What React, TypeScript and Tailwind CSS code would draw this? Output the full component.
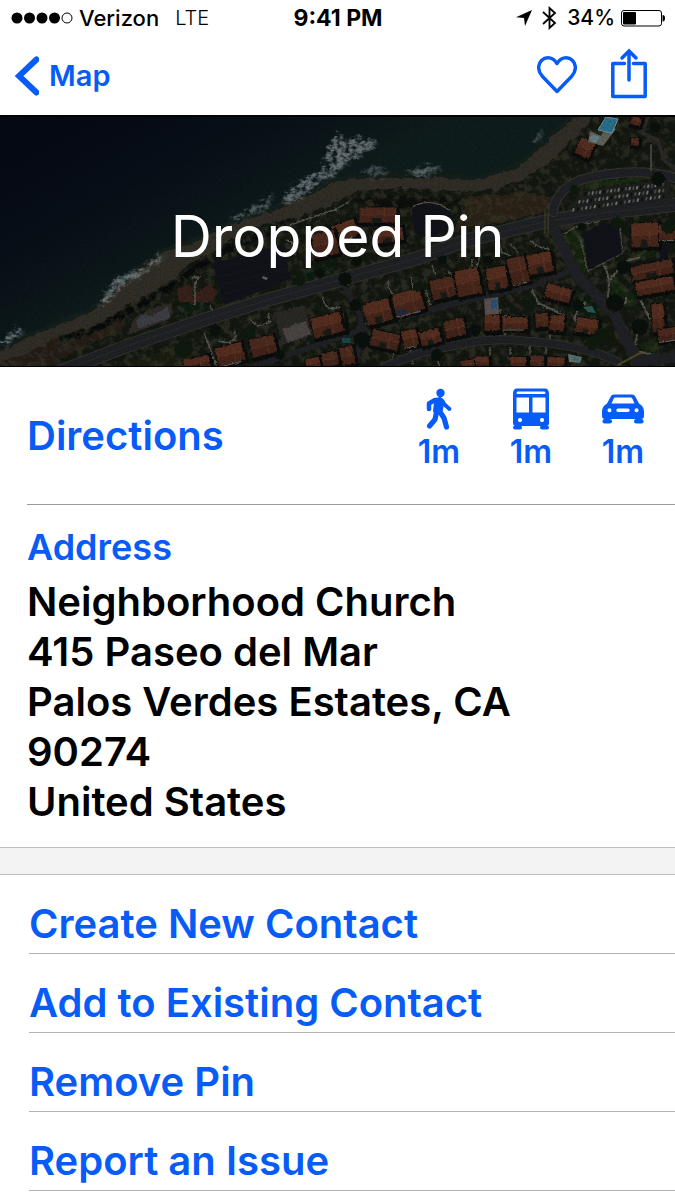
import React from "react";

type House = [x: number, y: number, w: number, h: number, angle: number];

const houses: House[] = [
  [378, 100, 37, 15, 0], [345, 115, 24, 16, -20], [388, 120, 30, 14, -8], [325, 129, 24, 24, -12],
  [378, 197, 26, 22, -15], [408, 187, 29, 22, -15], [443, 173, 24, 20, -12], [468, 167, 24, 26, -12],
  [497, 163, 20, 22, -10], [518, 155, 18, 26, -14], [540, 148, 24, 20, -10], [558, 178, 26, 14, 15],
  [385, 225, 28, 16, 12], [410, 223, 15, 16, -12], [430, 222, 20, 14, -15], [455, 213, 20, 17, -12],
  [492, 208, 15, 16, 0], [515, 208, 25, 12, 0], [542, 205, 13, 14, -5], [557, 208, 14, 16, 5],
  [587, 211, 22, 15, 10], [468, 249, 15, 8, -8], [482, 246, 14, 9, 0], [518, 247, 16, 10, 0],
  [537, 246, 14, 11, 0], [556, 247, 17, 10, 4], [338, 208, 14, 18, -8], [346, 241, 16, 18, -12],
  [645, 120, 27, 24, -2], [668, 117, 18, 15, 0], [652, 155, 42, 14, -12], [655, 171, 38, 14, -10],
  [658, 203, 12, 28, -3], [669, 219, 22, 12, -8], [585, 33, 15, 17, 25], [636, 6, 10, 8, 15],
  [635, 27, 8, 7, 0], [230, 239, 27, 18, -15], [197, 248, 26, 11, -12], [263, 231, 25, 18, -15],
  [327, 210, 30, 20, -15], [313, 248, 14, 10, -12], [330, 244, 16, 14, -12],
];

const trees = [
  [617, 108, 6], [624, 152, 7], [615, 188, 9], [602, 222, 9], [582, 112, 4], [658, 64, 7], [668, 112, 7],
  [345, 164, 7], [357, 146, 5], [300, 165, 6], [320, 158, 5], [442, 145, 5], [418, 172, 5], [362, 225, 8],
  [475, 215, 6], [530, 190, 6], [437, 240, 6], [215, 215, 6], [183, 235, 8], [280, 240, 5], [578, 190, 6],
  [250, 218, 6], [355, 190, 6], [488, 145, 5], [575, 75, 5], [640, 212, 8], [655, 12, 5], [592, 228, 7],
];

const parkedCars = Array.from({ length: 66 }, (_, i) => {
  const row = Math.floor(i / 22);
  const column = i % 22;
  return {
    x: 585 - row * 6 + column * (3.7 + row * 0.3),
    y: 77 + row * 8 - column * (0.45 + row * 0.1),
    bright: (i * 7) % 5,
  };
});

const coast =
  "M0 237L23 225L67 207L97 193L117 175L140 155L163 138L200 125L233 110L267 98L283 92L317 77L335 66L368 63L402 63L435 63L468 64L485 63L518 52L535 38L552 22L568 8L582 0";
const bluff =
  "M0 247L20 242L57 222L100 208L133 187L167 168L187 150L217 133L240 120L267 108L300 102L336 88L355 76L402 73L468 77L502 73L522 65L548 48L568 30L588 8L595 0";
const mainRoad = "M62 256L127 231L200 206L267 185L340 165L418 143L468 125L548 106L602 98L675 90";

function SatelliteMap() {
  return (
    <svg
      aria-hidden="true"
      className="absolute inset-0 h-full w-full"
      viewBox="0 0 675 252"
      preserveAspectRatio="xMidYMid slice"
      colorInterpolationFilters="sRGB"
    >
      <defs>
        <linearGradient id="sea" gradientUnits="userSpaceOnUse" x1="80" y1="0" x2="190" y2="200">
          <stop offset="0" stopColor="#050a14" />
          <stop offset="0.4" stopColor="#081018" />
          <stop offset="0.85" stopColor="#101d1d" />
        </linearGradient>
        <filter id="rough" x="-5%" y="-5%" width="110%" height="110%">
          <feTurbulence type="fractalNoise" baseFrequency="0.12" numOctaves="3" seed="4" />
          <feDisplacementMap in="SourceGraphic" scale="7" xChannelSelector="R" yChannelSelector="G" />
        </filter>
        <filter id="crumble" x="-5%" y="-5%" width="110%" height="110%">
          <feTurbulence type="fractalNoise" baseFrequency="0.35" numOctaves="2" seed="9" />
          <feDisplacementMap in="SourceGraphic" scale="3.5" xChannelSelector="R" yChannelSelector="G" />
        </filter>
        <filter id="spray" x="-10%" y="-10%" width="120%" height="120%">
          <feGaussianBlur in="SourceGraphic" stdDeviation="1.8" result="soft" />
          <feTurbulence type="fractalNoise" baseFrequency="0.16 0.22" numOctaves="4" seed="2" result="noise" />
          <feDisplacementMap in="soft" in2="noise" scale="12" xChannelSelector="R" yChannelSelector="G" result="torn" />
          <feColorMatrix in="noise" values="0 0 0 0 1  0 0 0 0 1  0 0 0 0 1  3 0 0 0 -0.8" result="mask" />
          <feComposite in="torn" in2="mask" operator="in" />
        </filter>
        <filter id="mottle" x="0" y="0" width="100%" height="100%">
          <feTurbulence type="fractalNoise" baseFrequency="0.13" numOctaves="4" seed="7" result="noise" />
          <feColorMatrix in="noise" values="0 0 0 0 0.23  0 0 0 0 0.22  0 0 0 0 0.17  4 0 0 0 -1.8" />
          <feComposite in2="SourceGraphic" operator="in" />
        </filter>
        <filter id="grain" x="0" y="0" width="100%" height="100%">
          <feTurbulence type="fractalNoise" baseFrequency="0.5" numOctaves="2" seed="3" />
          <feColorMatrix values="0 0 0 0 0  0 0 0 0 0  0 0 0 0 0  3 0 0 0 -1.2" />
        </filter>
      </defs>

      <rect width="675" height="252" fill="url(#sea)" />

      <g filter="url(#rough)">
        <path d={coast} fill="none" stroke="#141f1b" strokeWidth="9" />
        <path d={`${coast}L690 -10V270H-10V237Z`} fill="#302e26" />
        <path d={`${bluff}L690 -10V270H-10V247Z`} fill="#121710" />
        <path d="M0 247L20 242L57 222L100 208L133 190L120 215L80 235L40 256H0Z" fill="#241d16" />
        <path d="M60 225L100 212L133 194L167 174L200 150L240 128L290 108" fill="none" stroke="#080b0b" strokeWidth="6" />
        <path d="M350 84L400 80L460 84L440 98L380 92Z" fill="#0d0f0b" />
        <path d="M468 82L525 76L548 82L560 74L545 97L500 108L455 114Z" fill="#2a2217" />
      </g>

      <g fill="#0d1b10" filter="url(#crumble)">
        <path d="M220 195L285 175L310 150L335 148L337 158L268 180L225 196Z" />
        <path d="M175 190L210 185L212 198L178 208Z" />
        <path d="M562 122L580 112L590 148L585 160L570 145Z" fill="#15240e" />
        <path d="M610 165L618 165L636 182L634 192L612 190Z" fill="#132410" />
        <path d="M585 68L650 61L650 64L585 75Z" fill="#1a2a12" />
        <path d="M632 134L655 130L655 142L628 145Z" fill="#15220f" />
        <path d="M125 248L175 232L200 238L180 256H120Z" fill="#1a1d11" />
        <path d="M580 175L602 192L595 215L570 195Z" />
        <path d="M638 230L656 222L660 238L648 242Z" fill="#162310" />
      </g>
      <path d={`${bluff}L675 0V252H0Z`} fill="#fff" opacity="0.6" filter="url(#mottle)" />

      <g fill="none" stroke="#56554c" strokeWidth="1.4" filter="url(#crumble)">
        <path d="M204 218L218 254M190 202L192 210M210 190L214 204M234 214Q240 232 218 226M250 203Q255 215 270 207L268 198" />
        <path d="M323 182Q324 198 340 192M388 166Q390 188 408 182Q416 176 411 162M448 155Q455 169 472 156V145M432 150L435 160" />
        <path d="M500 130Q498 138 510 140M510 129L518 137M530 126Q540 134 550 134M480 140L476 155M416 172L422 186M454 158L458 178" />
        <path d="M368 191L366 212M392 184L394 205M426 175L430 190M452 213L452 225M500 194V225M505 200V222M550 197V225" />
        <path d="M395 236L388 252M410 232L413 250M430 226L440 252M490 232V252M510 232V252M530 229V252M546 229V252" />
        <path d="M577 210Q570 200 586 187M532 175L538 188L568 202M604 150Q612 165 607 186M607 186Q628 195 626 182" strokeWidth="2" />
        <path d="M640 204L634 235L655 241M610 165L624 147L640 142M640 184L650 204" strokeWidth="2" />
        <path d="M561 122Q572 110 600 106M620 110L622 138L588 156L580 122" stroke="#4c4b44" />
        <path d="M290 110L336 94L350 86M286 125Q298 128 295 140M412 92Q432 82 450 96" />
      </g>

      <g fill="none" stroke="#202125" strokeLinecap="round">
        <path d="M557 125Q560 140 579 160L608 188L626 214L632 238" stroke="#57564c" strokeWidth="4" />
        <path d={mainRoad} strokeWidth="14" stroke="#33332e" />
        <path d={mainRoad} strokeWidth="12" />
        <path d={mainRoad} strokeWidth="1" stroke="#2b2b2c" />
        <path d="M253 252L300 236L333 225L368 213L418 198L468 185L535 170L568 157" strokeWidth="6" />
        <path d="M385 252Q420 236 452 231Q490 222 525 226Q585 230 618 247" strokeWidth="9" stroke="#30302d" />
        <path d="M385 252Q420 236 452 231Q490 222 525 226Q585 230 618 247" strokeWidth="7" />
        <path d="M550 107L561 128L578 162L614 198L637 246L680 242" strokeWidth="11" />
        <path d="M553 97Q555 76 580 65Q635 50 679 64" strokeWidth="10" stroke="#363632" />
        <path d="M553 97Q555 76 580 65Q635 50 679 64" strokeWidth="8" />
        <path d="M648 2L642 18L658 25L664 45L678 56" strokeWidth="4" stroke="#2a2926" />
        <path d="M651 30V55" strokeWidth="2" stroke="#45433b" />
        <path d="M345 172L360 200L362 214L356 252" strokeWidth="5" />
        <path d="M545 98V118M548 98V118" strokeWidth="1" stroke="#4b4622" />
        <path d="M618 250L640 238" strokeWidth="2" stroke="#4b4622" />
      </g>

      <g fill="#12131a">
        <path d="M213 149L250 138L284 130L290 164L224 190Z" />
        <path d="M583 118L605 108L618 110L622 138L588 155Z" />
        <path d="M412 93Q432 82 450 97L456 112L432 122L414 118Z" />
        <path d="M568 92L585 76L668 64L672 84L575 98Z" fill="#1e201e" />
        <path d="M624 149L660 143L660 130L668 128V146L626 152Z" />
      </g>
      <g stroke="#191a22" strokeWidth="0.7">
        <path d="M217 154L286 137M219 162L288 145M221 170L289 153M223 179L290 160" />
      </g>
      {parkedCars.map((car, i) => (
        <rect
          key={i}
          x={car.x}
          y={car.y}
          width="1.8"
          height="3.4"
          fill={car.bright > 2 ? "#737776" : car.bright > 0 ? "#484c4d" : "#0d0e10"}
          transform={`rotate(18 ${car.x} ${car.y})`}
        />
      ))}

      <g filter="url(#crumble)">
        {houses.map(([x, y, w, h, angle], i) => (
          <g key={i} transform={`translate(${x} ${y}) rotate(${angle})`}>
            <rect x={-w / 2 - 1} y={-h / 2 - 1} width={w + 4} height={h + 5} fill="#0a0d0c" />
            <rect x={-w / 2} y={-h / 2} width={w} height={h} fill={i % 3 ? "#552e20" : "#4c2a1e"} />
            <path d={`M${-w / 2} 0H${w / 2}V${h / 2}H${-w / 2}Z`} fill="#3e2118" opacity="0.6" />
            <path d={`M${-w / 2} 0H${w / 2}M${w / 6} ${-h / 2}V${h / 2}`} stroke="#623726" strokeWidth="0.7" />
            {i % 2 === 0 && w > 18 && <rect x={-w / 6} y={h / 5} width={w / 4} height={h / 3} fill="#171b15" />}
            {i % 4 === 1 && <path d={`M${-w / 2} ${h / 2 + 1}H${w / 3}`} stroke="#65605a" strokeWidth="1.2" />}
          </g>
        ))}
        <path d="M178 174L190 169L193 182L208 169L217 176L212 187L178 187Z" fill="#38221b" />
        <path d="M192 162L199 162L195 169V190" fill="none" stroke="#5d574d" strokeWidth="1.6" />
        <path d="M128 220L170 204L172 188L150 194L134 203Z" fill="#302b25" />
        <path d="M136 205L145 199L151 201L168 192L170 203L154 208L138 214Z" fill="#3e3e46" />
        <path d="M274 198L304 190L312 220L282 230Z" fill="#2b2925" />
        <path d="M282 214L306 206L311 219L288 228Z" fill="#4a4644" />
      </g>

      <g filter="url(#crumble)">
        {trees.map(([x, y, r], i) => (
          <circle key={i} cx={x} cy={y} r={r} fill={i % 3 ? "#0a110c" : "#0f1a0e"} />
        ))}
      </g>

      <g>
        <path d="M590 16L601 21L607 10L616 14L603 31L588 27Z" fill="#5e625b" />
        <path d="M592 19L600 22L596 28L589 25Z" fill="#668087" />
        <path d="M606 2L618 4L612 18L598 15Z" fill="#286f8b" stroke="#789296" />
        <path d="M484 184L498 182L499 199L485 200Z" fill="#5a5152" />
        <path d="M491 185L497 184L497 193L491 194Z" fill="#295075" />
        <path d="M396 196L405 194L407 198L398 200Z" fill="#172c49" />
        <path d="M583 192L592 191L596 198L588 197Z" fill="#2d5754" />
        <path d="M568 239L582 242L580 248L569 247Z" fill="#61706a" />
        <path d="M572 242L579 243L577 247Z" fill="#2b7180" />
        <path d="M342 223L351 223L350 228L342 228Z" fill="#184747" />
        <path d="M263 161L268 163L266 165L262 163Z" fill="#62636b" />
      </g>

      <g fill="#7d868a" filter="url(#spray)">
        <path d="M328 36L338 18L345 24L362 23L379 26L368 37L350 47L335 60L318 70L300 84L283 90L288 76L308 62L325 54Z" opacity="0.8" />
        <path d="M232 104L246 96L266 84L275 80L268 92L248 101L232 108Z" opacity="0.65" />
        <path d="M98 192L108 172L118 162L140 154L160 140L163 144L142 160L122 172L108 188Z" opacity="0.8" />
        <path d="M0 226L20 212L24 217L8 230H0Z" opacity="0.9" />
        <path d="M360 56L378 52L392 57L378 63Z" opacity="0.5" />
        <path d="M405 58L428 51L444 54L424 61Z" opacity="0.7" />
        <path d="M534 25L542 15L544 18L537 29Z" opacity="0.5" />
      </g>

      <rect width="675" height="252" opacity="0.15" filter="url(#grain)" />
      <rect width="675" height="2" fill="#010205" />
      <rect y="251" width="675" height="1" fill="#010205" />
    </svg>
  );
}

function StatusBar() {
  return (
    <div className="grid h-9 grid-cols-[1fr_auto_1fr] items-center pr-[10px] pl-[11px] text-[22px] leading-6 text-black">
      <div className="flex items-center">
        <svg aria-label="Signal strength 4 of 5" className="mr-[6px] h-3 w-[62px]" viewBox="0 0 62 12">
          <circle cx="6" cy="6" r="5.5" />
          <circle cx="18.5" cy="6" r="5.5" />
          <circle cx="31" cy="6" r="5.5" />
          <circle cx="43.5" cy="6" r="5.5" />
          <circle cx="56" cy="6" r="5" fill="none" stroke="#000" />
        </svg>
        <span className="mr-4 font-medium">Verizon</span>
        <span className="text-[20px] font-light">LTE</span>
      </div>
      <time className="text-[23px] font-bold">9:41 PM</time>
      <div className="flex items-center justify-end">
        <svg aria-label="Location in use" className="mr-[10px] h-4 w-4" viewBox="0 0 16 16">
          <path d="M16 0L9 16L8 8L0 7.2Z" />
        </svg>
        <svg aria-label="Bluetooth on" className="mr-[10px] h-6 w-[15px]" viewBox="0 0 15 24" fill="none" stroke="#000" strokeWidth="1.8">
          <path d="M1 6L13 17L7.5 22V2L13 7L1 18" />
        </svg>
        <span className="mr-[6px] text-[21px] font-medium">34%</span>
        <svg aria-label="Battery" className="h-[18px] w-11" viewBox="0 0 44 18">
          <rect x="0.5" y="1.5" width="40" height="15.5" rx="2.5" fill="none" stroke="#000" />
          <rect x="2" y="3" width="13" height="12.5" rx="1" />
          <path d="M41.5 6Q44 6 44 9.25Q44 12.5 41.5 12.5Z" />
        </svg>
      </div>
    </div>
  );
}

function NavigationBar() {
  return (
    <nav className="flex h-[79px] items-center justify-between pr-7 pl-[15px] text-[#075cf7]">
      <button type="button" className="flex items-center gap-[10px] text-[29px] leading-9 font-semibold">
        <svg aria-hidden="true" className="h-10 w-6" viewBox="0 0 24 40" fill="none" stroke="currentColor">
          <path d="M21.5 3.5L4 20L21.5 36.5" strokeWidth="6" strokeLinecap="round" />
        </svg>
        Map
      </button>
      <div className="flex items-center gap-[34px] pb-1">
        <button type="button" aria-label="Add to favorites">
          <svg className="h-10 w-10" viewBox="0 0 40 40" fill="none" stroke="currentColor">
            <path
              d="M20 37.5L5.5 22.5C.5 17 .5 10.5 4.5 6.5C9 2 16 3 20 9.5C24 3 31 2 35.5 6.5C39.5 10.5 39.5 17 34.5 22.5Z"
              strokeWidth="3.4"
              strokeLinejoin="round"
            />
          </svg>
        </button>
        <button type="button" aria-label="Share">
          <svg className="h-[54px] w-9" viewBox="0 0 36 54" fill="none" stroke="currentColor" strokeWidth="3.5">
            <path d="M13.5 16.5H1.8V49.5H34.2V16.5H22.5" strokeLinecap="round" strokeLinejoin="round" />
            <path d="M18 33V4M11 11L18 4L25 11" strokeLinecap="round" />
          </svg>
        </button>
      </div>
    </nav>
  );
}

function WalkIcon() {
  return (
    <svg aria-hidden="true" className="h-[42px] w-[42px]" viewBox="0 0 42 42" fill="none" stroke="currentColor" strokeLinecap="round" strokeLinejoin="round">
      <circle cx="22.5" cy="5" r="4.2" fill="currentColor" stroke="none" />
      <path d="M16 12L22 10.5L25 13L23 24L16.5 23L17.5 15Z" fill="currentColor" stroke="currentColor" strokeWidth="3" />
      <path d="M17 12L11 15.5V21" strokeWidth="4.5" />
      <path d="M25 14L27 17L31.5 21" strokeWidth="3.8" />
      <path d="M18.5 24L17 31.5L11.5 38M22 24L26 30L28.5 39" strokeWidth="5.2" />
    </svg>
  );
}

function BusIcon() {
  return (
    <svg aria-hidden="true" className="h-[42px] w-[42px]" viewBox="0 0 42 42" fill="currentColor">
      <path
        fillRule="evenodd"
        d="M7 .5H35C38 .5 39 3 39 6V35Q39 38 36 38H6Q3 38 3 35V6C3 3 4 .5 7 .5ZM8 3.5Q6.5 3.5 6.5 5Q6.5 6 8 6H34Q35.5 6 35.5 5Q35.5 3.5 34 3.5ZM6.5 9.5V24.5H19V9.5ZM22.5 9.5V24.5H35.5V9.5ZM10 30A2.1 2.1 0 1 0 10 34.2A2.1 2.1 0 1 0 10 30ZM32 30A2.1 2.1 0 1 0 32 34.2A2.1 2.1 0 1 0 32 30Z"
      />
      <rect x="3" y="37.5" width="9" height="4" rx="2" />
      <rect x="30" y="37.5" width="9" height="4" rx="2" />
    </svg>
  );
}

function CarIcon() {
  return (
    <svg aria-hidden="true" className="h-[42px] w-[42px]" viewBox="0 0 42 42" fill="currentColor">
      <path
        fillRule="evenodd"
        d="M5 15.5L8.5 9C9.5 7 10.5 6.5 14 6.5H28C31.5 6.5 32.5 7 33.5 9L37 15.5C40 17 42 20 42 23.5V28Q42 31 39 31H3Q0 31 0 28V23.5C0 20 2 17 5 15.5ZM13 9.5Q12 9.5 11.5 11L9.5 15.5H32.5L30.5 11Q30 9.5 29 9.5ZM7.5 20.2A2 2 0 1 0 7.5 24.2A2 2 0 1 0 7.5 20.2ZM34.5 20.2A2 2 0 1 0 34.5 24.2A2 2 0 1 0 34.5 20.2ZM16 20.5Q14.3 20.5 14.3 22.2Q14.3 24 16 24H26Q27.7 24 27.7 22.2Q27.7 20.5 26 20.5Z"
      />
      <rect x="0.5" y="31" width="9.5" height="4.5" rx="2.2" />
      <rect x="32" y="31" width="9.5" height="4.5" rx="2.2" />
    </svg>
  );
}

const routes = [
  { label: "Walking directions", Icon: WalkIcon },
  { label: "Transit directions", Icon: BusIcon },
  { label: "Driving directions", Icon: CarIcon },
];

const actions = ["Create New Contact", "Add to Existing Contact", "Remove Pin", "Report an Issue"];

export default function App() {
  return (
    <main className="min-h-screen bg-white font-['Inter','Liberation_Sans',sans-serif] text-black">
      <StatusBar />
      <NavigationBar />

      <header className="relative flex h-[252px] items-center justify-center overflow-hidden bg-[#050b12] pb-2">
        <SatelliteMap />
        <h1 className="relative text-[57px] leading-[70px] font-normal text-white">Dropped Pin</h1>
      </header>

      <section className="ml-[27px] flex h-[138px] items-center justify-between border-b border-[#9b9b9b] pr-[31px] text-[#075cf7]">
        <button type="button" className="text-[40px] leading-[50px] font-semibold">
          Directions
        </button>
        <div className="flex gap-[50px] pb-[14px]">
          {routes.map(({ label, Icon }) => (
            <button key={label} type="button" aria-label={`${label}, 1m`} className="flex w-[42px] flex-col items-center gap-1">
              <Icon />
              <span className="text-[32px] leading-9 font-semibold">1m</span>
            </button>
          ))}
        </div>
      </section>

      <section className="px-[27px] pt-[19px] pb-5">
        <h2 className="text-[36px] leading-[46px] font-semibold text-[#075cf7]">Address</h2>
        <address className="pt-[7px] text-[40px] leading-[50px] font-semibold not-italic">
          Neighborhood Church
          <br />
          415 Paseo del Mar
          <br />
          Palos Verdes Estates, CA
          <br />
          90274
          <br />
          United States
        </address>
      </section>

      <div className="h-7 border-y border-[#bdbdbd] bg-[#f3f3f3]" />

      <ul className="pl-[29px]">
        {actions.map((action) => (
          <li key={action} className="border-b border-[#b3b3b3]">
            <button type="button" className="h-[78px] w-full pt-5 text-left text-[40px] leading-[50px] font-semibold text-[#075cf7]">
              {action}
            </button>
          </li>
        ))}
      </ul>
    </main>
  );
}
